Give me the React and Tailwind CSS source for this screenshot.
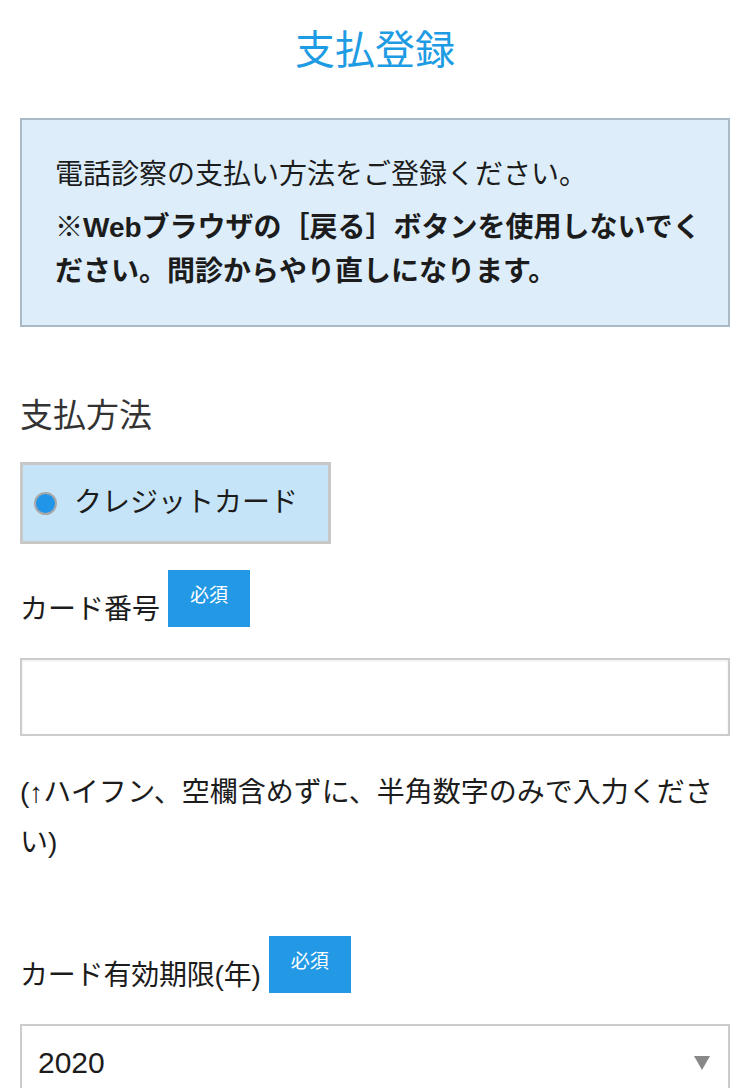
const FONT = "font-['Liberation_Sans','Noto_Sans_CJK_JP',sans-serif]"

function Required() {
  return (
    <span className="ml-[8px] flex h-[57px] w-[82px] justify-center bg-[#2399e6] pt-[14px] text-[19px] leading-[24px] text-white">
      必須
    </span>
  )
}

export default function App() {
  return (
    <div className={`${FONT} min-h-screen bg-white pb-10 pl-[20px] pr-[17px] text-[#1c1c1c]`}>
      {/* Title */}
      <div className="flex h-[100px] items-center justify-center">
        <h1 className="text-[40px] leading-[48px] text-[#1d9be3]">支払登録</h1>
      </div>

      {/* Notice box */}
      <div className="mt-[18px] border-2 border-[#a9b9c6] bg-[#ddeefa] pb-[31px] pl-[33px] pr-[12px] pt-[33px]">
        <p className="text-[28px] leading-[44px]">電話診察の支払い方法をご登録ください。</p>
        <p className="mt-[9px] text-[28px] font-bold leading-[44px]">
          ※Webブラウザの［戻る］ボタンを使用しないでく<br />ださい。問診からやり直しになります。
        </p>
      </div>

      {/* Payment method */}
      <h2 className="mt-[67px] text-[33px] leading-[44px] text-[#333]">支払方法</h2>
      <label className="mt-[24px] flex h-[82px] w-[311px] items-center border-[3px] border-[#c8c8c8] bg-[#c5e4f7] pl-[11px]">
        <span className="h-[23px] w-[23px] rounded-full border-2 border-[#a8a8a8] bg-[#2196e8]" />
        <span className="ml-[17px] text-[28px] leading-[34px]">クレジットカード</span>
      </label>

      {/* Card number */}
      <div className="mt-[26px] flex items-end">
        <span className="text-[28px] leading-[34px]">カード番号</span>
        <Required />
      </div>
      <div className="mt-[31px] h-[78px] border-2 border-[#cccccc] shadow-[inset_0_1px_3px_rgba(0,0,0,0.08)]" />
      <p className="mt-[32px] text-[28px] leading-[50px]">(↑ハイフン、空欄含めずに、半角数字のみで入力ください)</p>

      {/* Expiry year */}
      <div className="mt-[68px] flex items-end">
        <span className="text-[28px] leading-[34px] tracking-[-0.2px]">カード有効期限(年)</span>
        <Required />
      </div>
      <div className="mt-[31px] flex h-[78px] items-center justify-between border-2 border-[#cccccc] pl-[16px] pr-[18px]">
        <span className="text-[30px] leading-[36px]">2020</span>
        <svg width="16" height="14" viewBox="0 0 16 14">
          <polygon points="0,0 16,0 8,14" fill="#888" />
        </svg>
      </div>
    </div>
  )
}
